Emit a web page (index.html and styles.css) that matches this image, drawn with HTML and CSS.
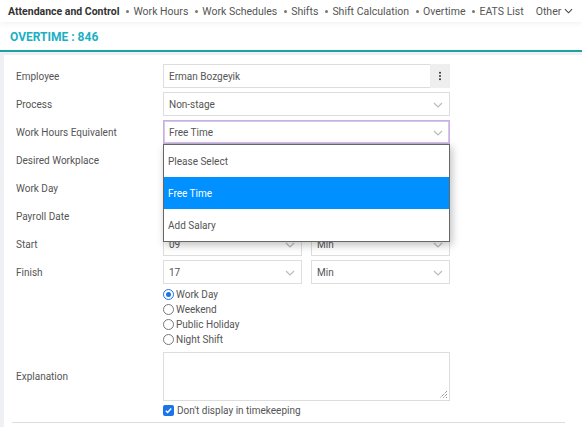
FILE: index.html
```html
<!DOCTYPE html>
<html>
<head>
<meta charset="utf-8">
<link rel="stylesheet" href="styles.css">
</head>
<body>
<nav class="nav">
  <span class="nav-home">Attendance and Control</span>
  <span class="nav-item">Work Hours</span>
  <span class="nav-item">Work Schedules</span>
  <span class="nav-item">Shifts</span>
  <span class="nav-item">Shift Calculation</span>
  <span class="nav-item">Overtime</span>
  <span class="nav-item">EATS List</span>
  <span class="nav-other">Other<svg class="chev-nav" viewBox="0 0 10 6" width="9" height="6"><path d="M1 1l4 4 4-4" fill="none" stroke="#444" stroke-width="1.2"/></svg></span>
</nav>
<header class="title">OVERTIME : 846</header>
<main class="main">
  <section class="card">
    <div class="row">
      <label class="lbl">Employee</label>
      <div class="field group">
        <div class="input grow">Erman Bozgeyik</div>
        <div class="kebab"><svg viewBox="0 0 4 12" width="4" height="10"><circle cx="2" cy="2" r="1.2" fill="#333"/><circle cx="2" cy="6" r="1.2" fill="#333"/><circle cx="2" cy="10" r="1.2" fill="#333"/></svg></div>
      </div>
    </div>
    <div class="row">
      <label class="lbl">Process</label>
      <div class="field"><div class="input select">Non-stage<svg class="chev" viewBox="0 0 10 6" width="10" height="6"><path d="M1 1l4 4 4-4" fill="none" stroke="#bbb" stroke-width="1.2"/></svg></div></div>
    </div>
    <div class="row">
      <label class="lbl">Work Hours Equivalent</label>
      <div class="field dd-wrap">
        <div class="input select focus">Free Time<svg class="chev" viewBox="0 0 10 6" width="10" height="6"><path d="M1 1l4 4 4-4" fill="none" stroke="#bbb" stroke-width="1.2"/></svg></div>
        <ul class="dropdown">
          <li>Please Select</li>
          <li class="active">Free Time</li>
          <li>Add Salary</li>
        </ul>
      </div>
    </div>
    <div class="row">
      <label class="lbl">Desired Workplace</label>
      <div class="field"><div class="input select"></div></div>
    </div>
    <div class="row">
      <label class="lbl">Work Day</label>
      <div class="field"><div class="input"></div></div>
    </div>
    <div class="row">
      <label class="lbl">Payroll Date</label>
      <div class="field"><div class="input"></div></div>
    </div>
    <div class="row">
      <label class="lbl">Start</label>
      <div class="field pair">
        <div class="input select">09<svg class="chev" viewBox="0 0 10 6" width="10" height="6"><path d="M1 1l4 4 4-4" fill="none" stroke="#bbb" stroke-width="1.2"/></svg></div>
        <div class="input select">Min<svg class="chev" viewBox="0 0 10 6" width="10" height="6"><path d="M1 1l4 4 4-4" fill="none" stroke="#bbb" stroke-width="1.2"/></svg></div>
      </div>
    </div>
    <div class="row">
      <label class="lbl">Finish</label>
      <div class="field pair">
        <div class="input select">17<svg class="chev" viewBox="0 0 10 6" width="10" height="6"><path d="M1 1l4 4 4-4" fill="none" stroke="#bbb" stroke-width="1.2"/></svg></div>
        <div class="input select">Min<svg class="chev" viewBox="0 0 10 6" width="10" height="6"><path d="M1 1l4 4 4-4" fill="none" stroke="#bbb" stroke-width="1.2"/></svg></div>
      </div>
    </div>
    <div class="row radios-row">
      <span class="lbl"></span>
      <div class="radios">
        <div class="radio"><span class="rdot on"></span>Work Day</div>
        <div class="radio"><span class="rdot"></span>Weekend</div>
        <div class="radio"><span class="rdot"></span>Public Holiday</div>
        <div class="radio"><span class="rdot"></span>Night Shift</div>
      </div>
    </div>
    <div class="row text-row">
      <label class="lbl">Explanation</label>
      <div class="field"><div class="textarea"><svg class="grip" viewBox="0 0 10 10" width="10" height="10"><path d="M9 2L2 9M9 5L5 9M9 8L8 9" stroke="#666" stroke-width="1" stroke-dasharray="1 1"/></svg></div></div>
    </div>
    <div class="row check-row">
      <span class="lbl"></span>
      <div class="check"><span class="cbox"><svg viewBox="0 0 10 10" width="9" height="9"><path d="M2 5.2l2 2 4-4.5" fill="none" stroke="#fff" stroke-width="1.6"/></svg></span>Don't display in timekeeping</div>
    </div>
    <div class="bottom-line"></div>
  </section>
</main>
</body>
</html>
```
FILE: styles.css
```css
* { box-sizing: border-box; }
html, body { margin: 0; padding: 0; }
body {
  font-family: Roboto, "Liberation Sans", sans-serif;
  font-size: 10px;
  color: #555;
  background: #eef0f3;
  width: 582px;
  height: 427px;
  overflow: hidden;
}
.nav {
  height: 22px;
  background: #fff;
  display: flex;
  align-items: center;
  padding-left: 8px;
  font-size: 10.5px;
  white-space: nowrap;
  box-shadow: 0 2px 5px rgba(0,0,0,0.05);
  position: relative;
  z-index: 1;
}
.nav-home { font-weight: 700; color: #333; }
.nav-item { margin-left: 7px; color: #555; display: flex; align-items: center; }
.nav-item::before {
  content: "";
  width: 3px; height: 3px; border-radius: 50%;
  background: #777;
  margin-right: 4px;
}
.nav-other { margin-left: 12px; color: #555; display: flex; align-items: center; gap: 3px; }
.title {
  background: #fff;
  height: 30px;
  display: flex;
  align-items: center;
  padding-left: 10px;
  padding-top: 2px;
  font-size: 12px;
  font-weight: 700;
  color: #1ab0c4;
  border-bottom: 2px solid #1ea39c;
}
.main { padding: 3px 0 0 4px; }
.card {
  background: #fff;
  padding: 9px 0 0 12px;
  height: 380px;
  position: relative;
}
.row {
  display: grid;
  grid-template-columns: 147px 287px;
  align-items: center;
  height: 24px;
  margin-bottom: 4px;
}
.lbl { color: #555; }
.field { height: 24px; }
.input {
  height: 24px;
  border: 1px solid #ddd;
  padding: 0 5px;
  display: flex;
  align-items: center;
  color: #555;
  background: #fff;
  position: relative;
}
.select .chev { position: absolute; right: 6px; top: 9px; }
.focus { border-color: #c5b0e0; box-shadow: 0 0 0 1px #d6c6ec inset; }
.group { display: flex; }
.grow { flex: 1; border-right: none; }
.kebab {
  width: 20px;
  height: 24px;
  background: #eee;
  display: flex;
  align-items: center;
  justify-content: center;
}
.pair { display: grid; grid-template-columns: 139px 139px; column-gap: 9px; }
.dd-wrap { position: relative; }
.dropdown {
  position: absolute;
  top: 24px; left: 0;
  width: 287px;
  margin: 0; padding: 0;
  list-style: none;
  background: #fff;
  border: 1px solid #666;
  box-shadow: 2px 3px 8px rgba(0,0,0,0.25);
  z-index: 5;
}
.dropdown li {
  height: 32px;
  display: flex;
  align-items: center;
  padding-left: 4px;
  color: #555;
}
.dropdown li.active { background: #0090ff; color: #fff; }
.radios-row { height: auto; margin-top: -1px; margin-bottom: 5px; }
.radios { display: flex; flex-direction: column; }
.radio { height: 15px; display: flex; align-items: center; gap: 2px; color: #555; }
.rdot {
  width: 11px; height: 11px; border-radius: 50%;
  border: 1px solid #777;
  background: #fff;
  display: inline-block;
  position: relative;
}
.rdot.on { border-color: #1a73e8; }
.rdot.on::after {
  content: ""; position: absolute; left: 2px; top: 2px;
  width: 5px; height: 5px; border-radius: 50%; background: #1a73e8;
}
.text-row { height: 49px; margin-bottom: 2px; }
.textarea {
  height: 49px;
  border: 1px solid #ddd;
  position: relative;
}
.text-row .field { height: 49px; }
.grip { position: absolute; right: 1px; bottom: 1px; }
.check-row { height: 15px; }
.check { display: flex; align-items: center; gap: 3px; color: #555; }
.cbox {
  width: 11px; height: 11px; border-radius: 2px;
  background: #1a73e8;
  display: flex; align-items: center; justify-content: center;
}
.bottom-line {
  margin-top: 2px;
  margin-left: -4px;
  border-top: 1px solid #ddd;
  width: 553px;
}
```
